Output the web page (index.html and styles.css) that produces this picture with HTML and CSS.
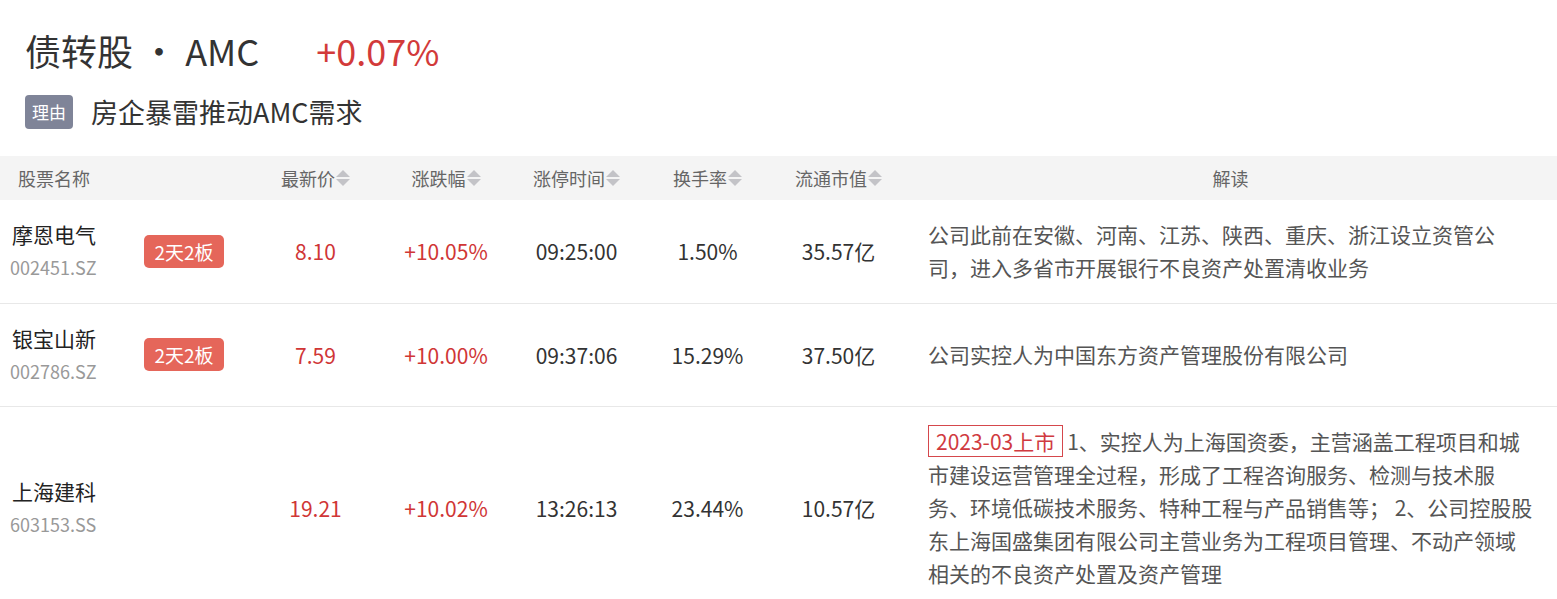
FILE: index.html
```html
<!DOCTYPE html>
<html lang="zh-CN">
<head>
<meta charset="utf-8">
<title>债转股 · AMC</title>
<link rel="stylesheet" href="styles.css">
</head>
<body>
<div class="page">
  <header class="topic">
    <h1 class="topic-title"><span class="topic-name">债转股 · AMC</span><span class="topic-change">+0.07%</span></h1>
    <div class="topic-reason"><span class="reason-badge">理由</span><span class="reason-text">房企暴雷推动AMC需求</span></div>
  </header>

  <table class="stocks">
    <colgroup>
      <col class="c-name"><col class="c-num"><col class="c-num2"><col class="c-num"><col class="c-num"><col class="c-num"><col>
    </colgroup>
    <thead>
      <tr>
        <th class="th-name">股票名称</th>
        <th><span class="th-inner">最新价<svg class="sort" viewBox="0 0 14 18" width="14" height="18"><polygon points="0,8 7,1 14,8"/><polygon points="0,10 14,10 7,17"/></svg></span></th>
        <th><span class="th-inner">涨跌幅<svg class="sort" viewBox="0 0 14 18" width="14" height="18"><polygon points="0,8 7,1 14,8"/><polygon points="0,10 14,10 7,17"/></svg></span></th>
        <th><span class="th-inner">涨停时间<svg class="sort" viewBox="0 0 14 18" width="14" height="18"><polygon points="0,8 7,1 14,8"/><polygon points="0,10 14,10 7,17"/></svg></span></th>
        <th><span class="th-inner">换手率<svg class="sort" viewBox="0 0 14 18" width="14" height="18"><polygon points="0,8 7,1 14,8"/><polygon points="0,10 14,10 7,17"/></svg></span></th>
        <th><span class="th-inner">流通市值<svg class="sort" viewBox="0 0 14 18" width="14" height="18"><polygon points="0,8 7,1 14,8"/><polygon points="0,10 14,10 7,17"/></svg></span></th>
        <th>解读</th>
      </tr>
    </thead>
    <tbody>
      <tr>
        <td class="td-name">
          <div class="name-wrap">
            <div class="name-info"><div class="stock-name">摩恩电气</div><div class="stock-code">002451.SZ</div></div>
            <span class="board-badge">2天2板</span>
          </div>
        </td>
        <td class="num up">8.10</td>
        <td class="num up">+10.05%</td>
        <td class="num">09:25:00</td>
        <td class="num">1.50%</td>
        <td class="num">35.57亿</td>
        <td class="desc"><div class="desc-text">公司此前在安徽、河南、江苏、陕西、重庆、浙江设立资管公司，进入多省市开展银行不良资产处置清收业务</div></td>
      </tr>
      <tr>
        <td class="td-name">
          <div class="name-wrap">
            <div class="name-info"><div class="stock-name">银宝山新</div><div class="stock-code">002786.SZ</div></div>
            <span class="board-badge">2天2板</span>
          </div>
        </td>
        <td class="num up">7.59</td>
        <td class="num up">+10.00%</td>
        <td class="num">09:37:06</td>
        <td class="num">15.29%</td>
        <td class="num">37.50亿</td>
        <td class="desc"><div class="desc-text">公司实控人为中国东方资产管理股份有限公司</div></td>
      </tr>
      <tr>
        <td class="td-name">
          <div class="name-wrap">
            <div class="name-info"><div class="stock-name">上海建科</div><div class="stock-code">603153.SS</div></div>
          </div>
        </td>
        <td class="num up">19.21</td>
        <td class="num up">+10.02%</td>
        <td class="num">13:26:13</td>
        <td class="num">23.44%</td>
        <td class="num">10.57亿</td>
        <td class="desc"><div class="desc-text"><span class="ipo-tag">2023-03上市</span>1、实控人为上海国资委，主营涵盖工程项目和城市建设运营管理全过程，形成了工程咨询服务、检测与技术服务、环境低碳技术服务、特种工程与产品销售等； 2、公司控股股东上海国盛集团有限公司主营业务为工程项目管理、不动产领域相关的不良资产处置及资产管理</div></td>
      </tr>
    </tbody>
  </table>
</div>
</body>
</html>
```

FILE: styles.css
```css
* { box-sizing: border-box; }

html, body {
  margin: 0;
  padding: 0;
  background: #ffffff;
}

body {
  font-family: "Noto Sans CJK SC", "Noto Sans", sans-serif;
  color: #333333;
}

.page {
  width: 1557px;
}

.topic {
  padding: 25px 25px 0 25px;
}

.topic-title {
  margin: 0;
  font-size: 36px;
  font-weight: 400;
  line-height: 50px;
  color: #333333;
  display: flex;
  align-items: center;
}

.topic-change {
  margin-left: 57px;
  color: #d23a3a;
}

.topic-reason {
  margin-top: 20px;
  display: flex;
  align-items: center;
  height: 34px;
}

.reason-badge {
  width: 48px;
  height: 34px;
  border-radius: 4px;
  background: #7f8498;
  color: #ffffff;
  font-size: 17px;
  line-height: 34px;
  text-align: center;
}

.reason-text {
  margin-left: 18px;
  font-size: 27px;
  line-height: 34px;
  color: #333333;
}

.stocks {
  margin-top: 27px;
  width: 1557px;
  border-collapse: collapse;
  table-layout: fixed;
}

.c-name { width: 250px; }
.c-num { width: 131px; }
.c-num2 { width: 130px; }

.stocks th {
  height: 44px;
  padding: 0;
  background: #f4f4f4;
  font-size: 18px;
  font-weight: 400;
  color: #666666;
  text-align: center;
  vertical-align: middle;
}

.stocks th.th-name {
  text-align: left;
  padding-left: 18px;
}

.th-inner {
  display: inline-flex;
  align-items: center;
}

.sort {
  display: block;
  margin-left: 1px;
  fill: #c3c3c7;
}

.stocks td {
  padding: 18px 0 18.5px 0;
  border-bottom: 1px solid #e8e8e8;
  vertical-align: middle;
}

.td-name {
  padding-left: 12px !important;
}

.name-wrap {
  display: flex;
  align-items: center;
}

.name-info {
  width: 132px;
}

.stock-name {
  font-size: 21px;
  line-height: 33px;
  color: #222222;
}

.stock-code {
  font-size: 18px;
  line-height: 33px;
  color: #999999;
  margin-left: -2px;
}

.board-badge {
  width: 80px;
  height: 33px;
  border-radius: 5px;
  background: #e5665a;
  color: #ffffff;
  font-size: 19px;
  line-height: 33px;
  text-align: center;
}

.num {
  text-align: center;
  font-size: 21px;
  color: #333333;
}

.num.up {
  color: #d03636;
}

.desc {
  padding-left: 24px !important;
}

.desc-text {
  width: 605px;
  font-size: 21px;
  line-height: 33px;
  color: #555555;
}

.ipo-tag {
  display: inline-block;
  height: 32px;
  line-height: 30px;
  padding: 0 7px;
  margin-right: 4px;
  border: 1px solid #d5474c;
  color: #d03a40;
  vertical-align: baseline;
}
```
